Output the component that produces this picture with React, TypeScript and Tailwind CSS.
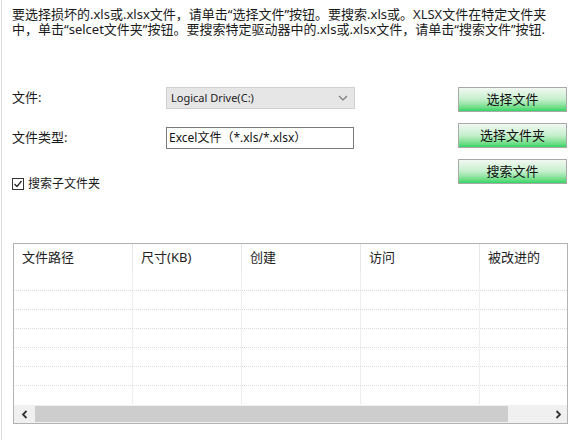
import React from "react";

const font = { fontFamily: '"Noto Sans", "Noto Sans CJK SC", sans-serif' };

function Chevron({ dir }: { dir: "down" | "left" | "right" }) {
  if (dir === "down")
    return (
      <svg width="10" height="6" viewBox="0 0 10 6">
        <path d="M1 1 L5 5 L9 1" stroke="#7a7a7a" strokeWidth="1.2" fill="none" />
      </svg>
    );
  if (dir === "left")
    return (
      <svg width="7" height="9" viewBox="0 0 7 9">
        <path d="M5.5 1 L2 4.5 L5.5 8" stroke="#333" strokeWidth="1.8" fill="none" />
      </svg>
    );
  return (
    <svg width="7" height="9" viewBox="0 0 7 9">
      <path d="M1.5 1 L5 4.5 L1.5 8" stroke="#333" strokeWidth="1.8" fill="none" />
    </svg>
  );
}

function GreenButton({ label }: { label: string }) {
  return (
    <div className="w-[109px] h-[25px] border border-[#a9a9a9] bg-gradient-to-b from-[#f2f8f2] via-[#c4efcc] to-[#2fd566] flex items-center justify-center text-[13px] text-[#111]">
      {label}
    </div>
  );
}

const cols = ["文件路径", "尺寸(KB)", "创建", "访问", "被改进的"];

export default function App() {
  return (
    <div
      className="w-[585px] h-[440px] bg-white overflow-hidden ml-[1px] border-l border-[#dedede] flex flex-col text-[#1a1a1a]"
      style={font}
    >
      <div className="pl-[10px] pt-[7px] text-[13px] leading-[15px] whitespace-nowrap">
        <div>要选择损坏的.xls或.xlsx文件，请单击“选择文件”按钮。要搜索.xls或。XLSX文件在特定文件夹</div>
        <div>中，单击“selcet文件夹”按钮。要搜索特定驱动器中的.xls或.xlsx文件，请单击“搜索文件”按钮.</div>
      </div>

      <div className="mt-[48px] h-[158px] flex">
        <div className="w-[353px] pl-[10px] pt-[2px] flex flex-col">
          <div className="flex items-center h-[22px]">
            <div className="w-[154px] text-[13px]">文件:</div>
            <div className="w-[189px] h-[22px] bg-[#e6e6e6] border border-[#cfcfcf] flex items-center justify-between pl-[4px] pr-[6px]">
              <span className="text-[11px] text-[#222]">Logical Drive(C:)</span>
              <Chevron dir="down" />
            </div>
          </div>
          <div className="flex items-center h-[22px] mt-[18px]">
            <div className="w-[154px] text-[13px]">文件类型:</div>
            <div className="w-[188px] h-[22px] bg-white border border-[#7a7a7a] flex items-center pl-[2px]">
              <span className="text-[12px] text-[#111] whitespace-nowrap">Excel文件（*.xls/*.xlsx）</span>
            </div>
          </div>
          <div className="flex items-center mt-[28px] h-[14px]">
            <div className="w-[12px] h-[12px] border border-[#333] flex items-center justify-center">
              <svg width="10" height="10" viewBox="0 0 10 10">
                <path d="M1.5 5 L4 7.5 L8.5 2" stroke="#222" strokeWidth="1.2" fill="none" />
              </svg>
            </div>
            <span className="ml-[4px] text-[12px]">搜索子文件夹</span>
          </div>
        </div>
        <div className="ml-[103px] pt-[2px] flex flex-col gap-[11px]">
          <GreenButton label="选择文件" />
          <GreenButton label="选择文件夹" />
          <GreenButton label="搜索文件" />
        </div>
      </div>

      <div className="ml-[11px] w-[555px] h-[181px] border border-[#b2b2b2] flex flex-col overflow-hidden">
        <div className="grid grid-cols-[119px_109px_119px_119px_1fr] h-[27px]">
          {cols.map((c, i) => (
            <div
              key={c}
              className={`flex items-center pl-[8px] text-[13px] text-[#222] whitespace-nowrap ${i < 4 ? "border-r border-[#e6e6e6]" : ""}`}
            >
              {c}
            </div>
          ))}
        </div>
        {[0, 1, 2, 3, 4, 5, 6].map((r) => (
          <div
            key={r}
            className={`grid grid-cols-[119px_109px_119px_119px_1fr] h-[19px] ${r > 0 ? "border-t border-dotted border-[#dcdcdc]" : ""}`}
          >
            {[0, 1, 2, 3, 4].map((c) => (
              <div key={c} className={c < 4 ? "border-r border-[#ededed]" : ""} />
            ))}
          </div>
        ))}
        <div className="h-[18px] flex bg-[#f0f0f0] mt-auto">
          <div className="w-[21px] flex items-center justify-center">
            <Chevron dir="left" />
          </div>
          <div className="w-[473px] my-[1px] bg-[#cdcdcd]" />
          <div className="flex-1 flex items-center justify-end pr-[5px]">
            <Chevron dir="right" />
          </div>
        </div>
      </div>
    </div>
  );
}
